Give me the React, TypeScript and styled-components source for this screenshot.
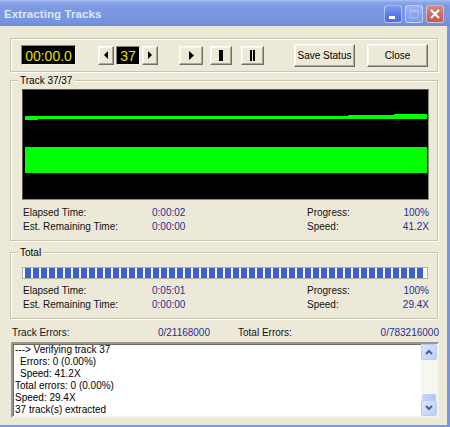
import React from "react";
import styled, { createGlobalStyle } from "styled-components";

const GlobalStyle = createGlobalStyle`
  html, body { margin: 0; padding: 0; background: #ffffff; }
  body { font-family: "Liberation Sans", Arial, sans-serif; }
  * { box-sizing: border-box; }
`;

const Window = styled.div`
  width: 450px;
  height: 427px;
  display: flex;
  flex-direction: column;
  overflow: hidden;
  font-family: "Liberation Sans", Arial, sans-serif;
  font-size: 10px;
  color: #000;
`;

const TitleBar = styled.div`
  height: 26px;
  flex: none;
  display: flex;
  align-items: center;
  padding: 0 6px 0 4px;
  background: linear-gradient(
    to bottom,
    #a9bff2 0px,
    #8ea8ea 2px,
    #7d99e2 6px,
    #7a96e0 18px,
    #7390dc 24px,
    #6c89d6 26px
  );
`;

const TitleText = styled.span`
  flex: 1;
  color: #dde6fa;
  font-weight: bold;
  font-size: 11.5px;
  letter-spacing: 0.1px;
  margin-top: 1px;
`;

const CaptionButtons = styled.div`
  display: flex;
  gap: 3px;
  margin-top: 1px;
`;

const CaptionButton = styled.div<{ $kind: "min" | "max" | "close" }>`
  width: 18px;
  height: 18px;
  border-radius: 3px;
  border: 1px solid rgba(235, 242, 255, 0.55);
  display: flex;
  align-items: center;
  justify-content: center;
  background: ${(p) =>
    p.$kind === "close"
      ? "linear-gradient(to bottom, #d48a86, #c66a66 60%, #bd5e5c)"
      : p.$kind === "min"
      ? "linear-gradient(to bottom, #7c9cf0, #5679e2 60%, #4c70da)"
      : "linear-gradient(to bottom, #9db4f0, #8aa4ea 60%, #7f9ae6)"};
`;

const Body = styled.div`
  flex: 1;
  background: #ece9d8;
  border-right: 3px solid #7a96e0;
  border-bottom: 2px solid #7a96e0;
  padding: 12px 9px 0 10px;
  display: flex;
  flex-direction: column;
`;

const Etched = styled.div<{ $mt?: number; $pad: string }>`
  position: relative;
  margin-top: ${(p) => p.$mt ?? 0}px;
  padding: ${(p) => p.$pad};
  border: 1px solid #c6c3b3;
  box-shadow: inset 1px 1px 0 #ffffff, 1px 1px 0 #ffffff;
`;

const Toolbar = styled(Etched)`
  height: 34px;
  display: flex;
  align-items: center;
`;

const GroupLabel = styled.span`
  position: absolute;
  top: -7px;
  left: 7px;
  padding: 0 2px;
  line-height: 13px;
  background: #ece9d8;
  font-size: 10px;
`;

const Lcd = styled.div<{ $w: number; $h: number; $ml?: number }>`
  width: ${(p) => p.$w}px;
  height: ${(p) => p.$h}px;
  margin-left: ${(p) => p.$ml ?? 0}px;
  background: #000;
  color: #e2e000;
  border: 1px solid;
  border-color: #8a877a #f4f2e8 #f4f2e8 #8a877a;
  display: flex;
  align-items: center;
  justify-content: center;
  font-size: 14px;
  line-height: 1;
  padding-top: 1px;
`;

const Btn = styled.button<{ $w: number; $h: number; $ml?: number }>`
  width: ${(p) => p.$w}px;
  height: ${(p) => p.$h}px;
  margin: 0 0 0 ${(p) => p.$ml ?? 0}px;
  padding: 0;
  background: #ece9d8;
  border: 1px solid;
  border-color: #ffffff #716f64 #716f64 #ffffff;
  box-shadow: inset -1px -1px 0 #aca899, inset 1px 1px 0 #f6f5ee;
  display: flex;
  align-items: center;
  justify-content: center;
  font-family: "Liberation Sans", Arial, sans-serif;
  font-size: 10px;
  color: #000;
  cursor: default;
`;

const Display = styled.div`
  height: 111px;
  background: #000;
  border: 1px solid;
  border-color: #5b564b #8c887c #8c887c #5b564b;
  display: flex;
`;

const Row = styled.div<{ $mt?: number }>`
  display: grid;
  grid-template-columns: 129px 155px 1fr auto;
  height: 14px;
  line-height: 14px;
  margin-top: ${(p) => p.$mt ?? 0}px;
  padding-left: 1px;
  white-space: nowrap;
`;

const Label = styled.span`
  color: #111;
`;

const Value = styled.span`
  color: #1f2c96;
`;

const ProgressBar = styled.div`
  height: 12px;
  margin-right: 1px;
  border: 1px solid #b2af9f;
  background: #ffffff;
  padding: 0 2px 0 2px;
  display: flex;
`;

const ProgressFill = styled.div`
  flex: 1;
  background: repeating-linear-gradient(
    to right,
    #3a62d6 0px,
    #3a62d6 6px,
    #ffffff 6px,
    #ffffff 8px
  );
`;

const ErrorsRow = styled.div`
  display: grid;
  grid-template-columns: 198px 1fr;
  column-gap: 28px;
  height: 14px;
  line-height: 14px;
  margin-top: 7px;
  padding-left: 2px;
  padding-right: 0;
  margin-right: -1px;
`;

const ErrorCell = styled.div`
  display: flex;
  justify-content: space-between;
`;

const LogBox = styled.div`
  height: 76px;
  margin: 2px -1px 0 1px;
  background: #ffffff;
  border: 2px solid;
  border-color: #9a978a #f4f2e8 #f4f2e8 #9a978a;
  box-shadow: inset 1px 1px 0 #6e6b60;
  display: flex;
`;

const LogText = styled.div`
  flex: 1;
  padding: 0 2px;
  font-size: 10px;
  line-height: 12px;
  white-space: pre;
`;

const LogLine = styled.div<{ $indent?: number }>`
  padding-left: ${(p) => p.$indent ?? 0}px;
`;

const Scrollbar = styled.div`
  width: 16px;
  background: #f7f7f2;
  display: flex;
  flex-direction: column;
  justify-content: space-between;
`;

const ScrollButton = styled.div`
  width: 16px;
  height: 16px;
  border-radius: 2px;
  border: 1px solid #b8cbf5;
  background: linear-gradient(to bottom right, #dce6fe, #bccffb);
  display: flex;
  align-items: center;
  justify-content: center;
`;

const ScrollBottom = styled.div`
  display: flex;
  flex-direction: column;
`;

const Thumb = styled.div`
  height: 6px;
  margin: 0 1px;
  border-radius: 2px 2px 0 0;
  background: linear-gradient(to right, #c6d6fb, #b2c7f8);
`;

const Tri = ({ dir, w, h }: { dir: "l" | "r"; w: number; h: number }) => (
  <svg width={w} height={h} viewBox={`0 0 ${w} ${h}`}>
    {dir === "r" ? (
      <polygon points={`0,0 ${w},${h / 2} 0,${h}`} fill="#000" />
    ) : (
      <polygon points={`${w},0 0,${h / 2} ${w},${h}`} fill="#000" />
    )}
  </svg>
);

const Chevron = ({ up }: { up: boolean }) => (
  <svg width="8" height="6" viewBox="0 0 8 6">
    <polyline
      points={up ? "1,5 4,2 7,5" : "1,1 4,4 7,1"}
      fill="none"
      stroke="#4d6185"
      strokeWidth="2"
    />
  </svg>
);

export default function App() {
  return (
    <>
      <GlobalStyle />
      <Window>
        <TitleBar>
          <TitleText>Extracting Tracks</TitleText>
          <CaptionButtons>
            <CaptionButton $kind="min">
              <svg width="16" height="16" viewBox="0 0 16 16">
                <rect x="4" y="10" width="6" height="3" fill="#ffffff" />
              </svg>
            </CaptionButton>
            <CaptionButton $kind="max">
              <svg width="16" height="16" viewBox="0 0 16 16">
                <rect x="4" y="4" width="8" height="8" fill="none" stroke="#a9bdf2" strokeWidth="1" />
                <rect x="4" y="4" width="8" height="2" fill="#a9bdf2" />
              </svg>
            </CaptionButton>
            <CaptionButton $kind="close">
              <svg width="16" height="16" viewBox="0 0 16 16">
                <path d="M4 4 L12 12 M12 4 L4 12" stroke="#ffffff" strokeWidth="2" />
              </svg>
            </CaptionButton>
          </CaptionButtons>
        </TitleBar>

        <Body>
          <Toolbar $pad="0 0 0 10px">
            <Lcd $w={55} $h={20}>00:00.0</Lcd>
            <Btn $w={16} $h={19} $ml={22}>
              <Tri dir="l" w={4} h={8} />
            </Btn>
            <Lcd $w={24} $h={19} $ml={2}>37</Lcd>
            <Btn $w={16} $h={19} $ml={2}>
              <Tri dir="r" w={4} h={8} />
            </Btn>
            <Btn $w={24} $h={19} $ml={21}>
              <Tri dir="r" w={5} h={9} />
            </Btn>
            <Btn $w={22} $h={19} $ml={7}>
              <svg width="4" height="11" viewBox="0 0 4 11">
                <rect x="0" y="0" width="4" height="11" fill="#000" />
              </svg>
            </Btn>
            <Btn $w={23} $h={19} $ml={9}>
              <svg width="5" height="11" viewBox="0 0 5 11">
                <rect x="0" y="0" width="2" height="11" fill="#000" />
                <rect x="3" y="0" width="2" height="11" fill="#000" />
              </svg>
            </Btn>
            <Btn $w={61} $h={23} $ml={30}>Save Status</Btn>
            <Btn $w={61} $h={23} $ml={12}>Close</Btn>
          </Toolbar>

          <Etched $mt={8} $pad="8px 8px 6px 11px">
            <GroupLabel>Track 37/37</GroupLabel>
            <Display>
              <svg width="405" height="109" viewBox="0 0 405 109">
                <rect x="2" y="26" width="402" height="3" fill="#00ff00" />
                <rect x="2" y="26" width="13" height="4" fill="#00ff00" />
                <rect x="325" y="25" width="79" height="4" fill="#00ff00" />
                <rect x="371" y="24" width="33" height="5" fill="#00ff00" />
                <rect x="2" y="57" width="402" height="26" fill="#00ff00" />
              </svg>
            </Display>
            <Row $mt={6}>
              <Label>Elapsed Time:</Label>
              <Value>0:00:02</Value>
              <Label>Progress:</Label>
              <Value>100%</Value>
            </Row>
            <Row>
              <Label>Est. Remaining Time:</Label>
              <Value>0:00:00</Value>
              <Label>Speed:</Label>
              <Value>41.2X</Value>
            </Row>
          </Etched>

          <Etched $mt={11} $pad="14px 8px 6px 11px">
            <GroupLabel>Total</GroupLabel>
            <ProgressBar>
              <ProgressFill />
            </ProgressBar>
            <Row $mt={5}>
              <Label>Elapsed Time:</Label>
              <Value>0:05:01</Value>
              <Label>Progress:</Label>
              <Value>100%</Value>
            </Row>
            <Row>
              <Label>Est. Remaining Time:</Label>
              <Value>0:00:00</Value>
              <Label>Speed:</Label>
              <Value>29.4X</Value>
            </Row>
          </Etched>

          <ErrorsRow>
            <ErrorCell>
              <Label>Track Errors:</Label>
              <Value>0/21168000</Value>
            </ErrorCell>
            <ErrorCell>
              <Label>Total Errors:</Label>
              <Value>0/783216000</Value>
            </ErrorCell>
          </ErrorsRow>

          <LogBox>
            <LogText>
              <LogLine>---&gt; Verifying track 37</LogLine>
              <LogLine $indent={5}>Errors: 0 (0.00%)</LogLine>
              <LogLine $indent={5}>Speed: 41.2X</LogLine>
              <LogLine>Total errors: 0 (0.00%)</LogLine>
              <LogLine>Speed: 29.4X</LogLine>
              <LogLine>37 track(s) extracted</LogLine>
            </LogText>
            <Scrollbar>
              <ScrollButton>
                <Chevron up />
              </ScrollButton>
              <ScrollBottom>
                <Thumb />
                <ScrollButton>
                  <Chevron up={false} />
                </ScrollButton>
              </ScrollBottom>
            </Scrollbar>
          </LogBox>
        </Body>
      </Window>
    </>
  );
}
